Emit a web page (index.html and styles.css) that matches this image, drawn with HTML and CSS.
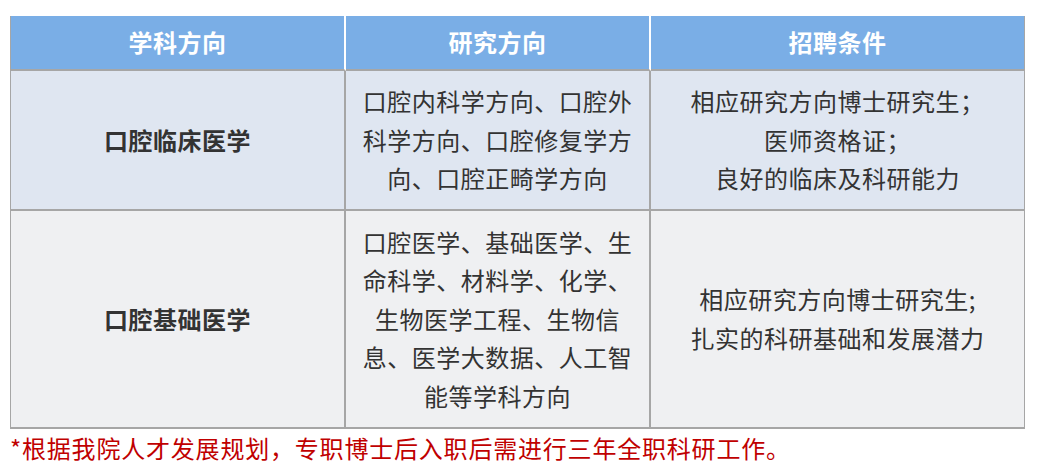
FILE: index.html
```html
<!DOCTYPE html>
<html lang="zh-CN">
<head>
<meta charset="utf-8">
<title>招聘方向</title>
<link rel="stylesheet" href="styles.css">
</head>
<body>
<div class="wrap">
  <table class="recruit">
    <thead>
      <tr>
        <th class="c1">学科方向</th>
        <th class="c2">研究方向</th>
        <th class="c3">招聘条件</th>
      </tr>
    </thead>
    <tbody>
      <tr class="row-a">
        <td class="subject">口腔临床医学</td>
        <td class="dir">口腔内科学方向、口腔外科学方向、口腔修复学方向、口腔正畸学方向</td>
        <td class="cond">相应研究方向博士研究生；<br>医师资格证；<br>良好的临床及科研能力</td>
      </tr>
      <tr class="row-b">
        <td class="subject">口腔基础医学</td>
        <td class="dir">口腔医学、基础医学、生命科学、材料学、化学、生物医学工程、生物信息、医学大数据、人工智能等学科方向</td>
        <td class="cond">相应研究方向博士研究生;<br>扎实的科研基础和发展潜力</td>
      </tr>
    </tbody>
  </table>
  <p class="note">*根据我院人才发展规划，专职博士后入职后需进行三年全职科研工作。</p>
</div>
</body>
</html>
```

FILE: styles.css
```css
html, body {
  margin: 0;
  padding: 0;
  background: #ffffff;
}

body {
  font-family: "Noto Sans CJK SC", "Noto Sans", sans-serif;
  color: #333333;
}

.wrap {
  padding: 16px 10px 0 10px;
}

.recruit {
  width: 1015px;
  border-collapse: separate;
  border-spacing: 0;
  table-layout: fixed;
  font-size: 24px;
  letter-spacing: 0.5px;
  line-height: 38.5px;
}

.recruit th,
.recruit td {
  text-align: center;
  vertical-align: middle;
}

.recruit .c1 { width: 333px; }
.recruit .c2 { width: 303px; }

.recruit th {
  background: #7aaee6;
  color: #ffffff;
  font-weight: 700;
  padding: 7px 0;
  border-right: 2px solid #ffffff;
  border-bottom: 2px solid #a6a6a6;
}

.recruit th.c1 {
  border-left: 1px solid #a6a6a6;
}

.recruit th.c3 {
  border-right: 1px solid #a6a6a6;
}

.recruit td {
  padding: 11.5px 14px;
  border-right: 2px solid #a6a6a6;
  border-bottom: 2px solid #a6a6a6;
}

.recruit td.subject {
  border-left: 1px solid #a6a6a6;
  font-weight: 700;
}

.recruit td.cond {
  border-right: 1px solid #a6a6a6;
  padding: 11.5px 8px;
}

.row-a td {
  background: #dfe6f1;
}

.row-b td {
  background: #eff0f2;
}

.note {
  margin: 0;
  font-size: 24px;
  letter-spacing: 0.8px;
  line-height: 38px;
  color: #c00000;
}
```
